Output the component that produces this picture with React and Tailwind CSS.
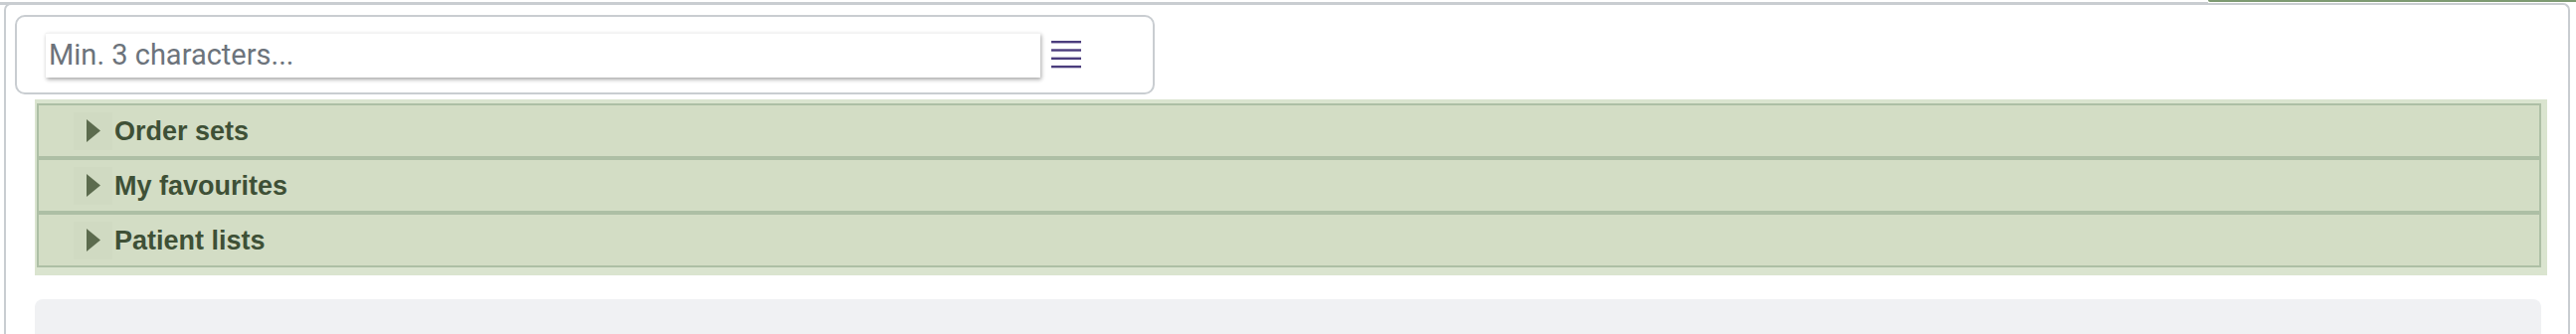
import React from "react";

const sections = ["Order sets", "My favourites", "Patient lists"];

function MenuIcon() {
  return (
    <svg width="30" height="28" viewBox="0 0 30 28" className="shrink-0">
      {[1.2, 9.5, 17.8, 26.1].map((y) => (
        <line key={y} x1="0" y1={y} x2="30" y2={y} stroke="#4b3d7d" strokeWidth="2.4" />
      ))}
    </svg>
  );
}

function SectionRow({ label }) {
  return (
    <div className="h-[55px] flex items-center border-2 border-[#adbfa5] bg-[#d3ddc5]">
      <div className="ml-[35px] w-[39px] h-[38px] flex items-center justify-center bg-[#d0dac2]">
        <svg width="14" height="23" viewBox="0 0 14 23">
          <polygon points="0,0 14,11.5 0,23" fill="#5c6b4e" />
        </svg>
      </div>
      <span
        className="ml-[2px] mt-[1px] text-[27px] font-bold text-[#3e5036] leading-none"
        style={{ fontFamily: "'Liberation Sans', Arial, sans-serif" }}
      >
        {label}
      </span>
    </div>
  );
}

export default function App() {
  return (
    <div
      className="w-[2590px] h-[336px] overflow-hidden bg-white"
      style={{ fontFamily: "Roboto, 'Liberation Sans', sans-serif" }}
    >
      <div className="h-[2px] flex justify-end">
        <div className="w-[370px] h-[2px] bg-[#7e9a72] rounded-bl-[3px]" />
      </div>
      <div className="h-[3px] w-[2220px] bg-[#c9cdd1]" />

      <div className="ml-[4px] mr-[6px] -mt-[2px] h-[340px] border-x-2 border-t-2 border-[#c9cdd1] rounded-t-[7px] bg-white">
        <div className="ml-[9px] mt-[10px] w-[1146px] h-[80px] border-2 border-[#c9cdd1] rounded-[10px] flex items-center pl-[29px]">
          <div className="w-[1000px] h-[45px] bg-white flex items-center pl-[3px] shadow-[1px_2px_4px_rgba(0,0,0,0.35)] border-t border-[#f2f2f2]">
            <span className="text-[29px] text-[#6c737b]">Min. 3 characters...</span>
          </div>
          <div className="ml-[11px] -mt-[1px]">
            <MenuIcon />
          </div>
        </div>

        <div className="ml-[29px] mr-[21px] mt-[5px] bg-[#dae4cf] pt-[4px] pl-[2px] pr-[6px] pb-[8px]">
          {sections.map((s) => (
            <SectionRow key={s} label={s} />
          ))}
        </div>

        <div className="ml-[29px] mr-[27px] mt-[24px] h-[60px] bg-[#f0f1f3] rounded-t-[8px]" />
      </div>
    </div>
  );
}
